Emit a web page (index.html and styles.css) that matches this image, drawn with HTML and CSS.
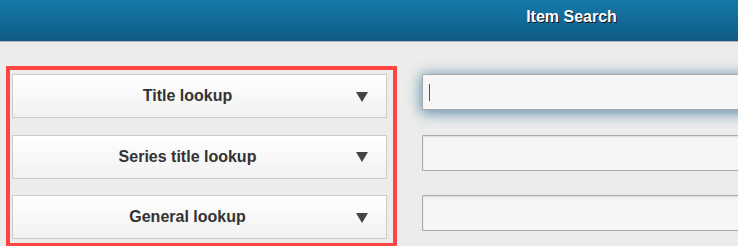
FILE: index.html
```html
<!DOCTYPE html>
<html lang="en">
<head>
    <meta charset="UTF-8">
    <meta name="viewport" content="width=device-width, initial-scale=1.0">
    <title>Item Search</title>
    <link rel="stylesheet" href="styles.css">
</head>
<body>
    <div class="page">
        <!-- header bar -->
        <div class="header">
            <h1>Item Search</h1>
        </div>

        <div class="content">
            <!-- lookup buttons -->
            <div class="lookups">
                <button type="button" class="lookup-btn">
                    <span class="label">Title lookup</span>
                    <svg class="arrow" width="12" height="10" viewBox="0 0 12 10"><polygon points="0,0 12,0 6,10" fill="#444"/></svg>
                </button>
                <button type="button" class="lookup-btn">
                    <span class="label">Series title lookup</span>
                    <svg class="arrow" width="12" height="10" viewBox="0 0 12 10"><polygon points="0,0 12,0 6,10" fill="#444"/></svg>
                </button>
                <button type="button" class="lookup-btn">
                    <span class="label">General lookup</span>
                    <svg class="arrow" width="12" height="10" viewBox="0 0 12 10"><polygon points="0,0 12,0 6,10" fill="#444"/></svg>
                </button>
            </div>

            <!-- search fields -->
            <div class="fields">
                <div class="field">
                    <input type="text" class="focused">
                    <span class="caret"></span>
                </div>
                <div class="field">
                    <input type="text">
                </div>
                <div class="field">
                    <input type="text">
                </div>
            </div>
        </div>
    </div>
</body>
</html>
```

FILE: styles.css
```css
body {
    margin: 0;
    padding: 0;
    overflow: hidden;
    background-color: #ececec;
    font-family: "Liberation Sans", Arial, sans-serif;
}

.page {
    width: 1143px;
}

.header {
    height: 41px;
    background: linear-gradient(#1679aa, #0e5b85);
    border-bottom: 1px solid #b3b3b3;
}

.header h1 {
    margin: 0;
    font-size: 16px;
    line-height: 33px;
    text-align: center;
    color: #fff;
    text-shadow: 1px 1px 0 #111;
}

.content {
    display: flex;
    align-items: flex-start;
    padding: 24px 0 0 6px;
}

.lookups {
    width: 375px;
    display: flex;
    flex-direction: column;
    gap: 16.5px;
    padding: 4px 6px 4px 2px;
    border: 4px solid #ff4444;
}

.lookup-btn {
    display: flex;
    align-items: center;
    height: 44px;
    padding: 0;
    background: linear-gradient(#ffffff, #f1f1f1);
    border: 1px solid #cccccc;
    font-family: inherit;
    font-size: 16px;
    font-weight: bold;
    color: #333;
    text-shadow: 0 1px 0 #f3f3f3;
    cursor: pointer;
}

.lookup-btn .label {
    flex: 1;
    text-align: center;
    padding-left: 6px;
}

.lookup-btn .arrow {
    margin: 1px 18px 0 0;
}

.fields {
    flex: 1;
    display: flex;
    flex-direction: column;
    gap: 24.5px;
    padding-top: 8px;
    margin-left: 25px;
}

.field {
    position: relative;
}

.field input {
    display: block;
    box-sizing: border-box;
    width: 100%;
    height: 36px;
    margin: 0;
    background-color: #f6f6f6;
    border: 1px solid #aaa;
    border-radius: 1px;
    box-shadow: inset 0 1px 2px rgba(0, 0, 0, 0.12);
    outline: none;
}

.field input.focused {
    box-shadow: 0 2px 14px 1px rgba(40, 105, 145, 0.75);
}

.caret {
    position: absolute;
    left: 7px;
    top: 10px;
    width: 1px;
    height: 17px;
    background-color: #555;
}
```
